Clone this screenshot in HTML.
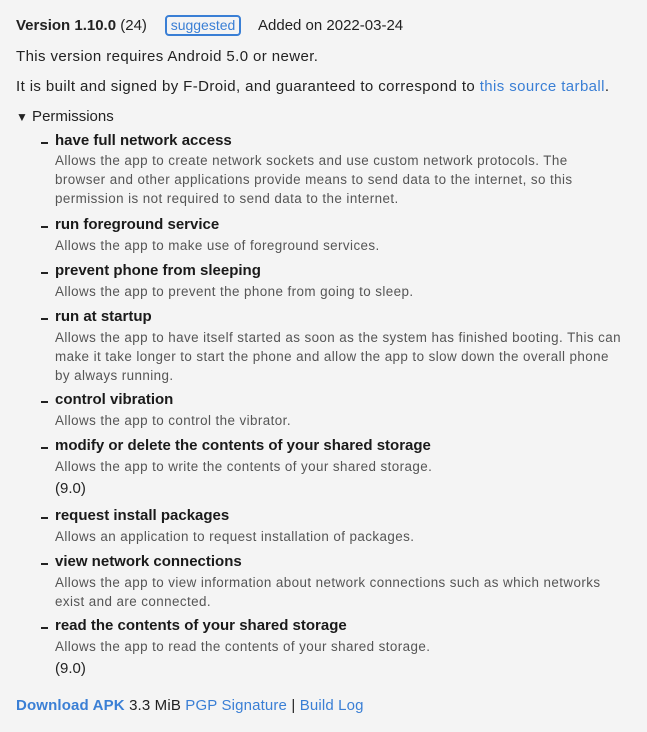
<!DOCTYPE html>
<html><head><meta charset="utf-8"><style>
html,body{margin:0;padding:0;}
body{width:647px;height:732px;background:#f4f4f4;font-family:"Liberation Sans",sans-serif;color:#222;position:relative;overflow:hidden}
.a{position:absolute;white-space:nowrap;}
.m{font-size:15px;line-height:18px;}
.ls{letter-spacing:0.4px}
.t{font-size:15px;line-height:18px;font-weight:bold;left:55px;color:#1a1a1a}
.d{font-size:13.4px;line-height:19px;left:55px;color:#555;letter-spacing:0.42px}
.dash{position:absolute;left:41px;width:7px;height:2px;background:#222}
a{color:#3a7fd5;text-decoration:none}
.b{font-weight:bold}
</style></head><body>
<div class="a m" style="left:16px;top:17px"><span class="b">Version 1.10.0</span> (24)</div>
<div class="a" style="left:165px;top:15px;width:76px;height:21px;border:2px solid #3a7fd5;border-radius:4px;box-sizing:border-box;color:#3a7fd5;font-size:14px;line-height:17px;text-align:center">suggested</div>
<div class="a m" style="left:258px;top:17px">Added on 2022-03-24</div>
<div class="a m ls" style="left:16px;top:48px">This version requires Android 5.0 or newer.</div>
<div class="a m ls" style="left:16px;top:78px">It is built and signed by F-Droid, and guaranteed to correspond to <a>this source tarball</a>.</div>
<div class="a m" style="left:16px;top:108px"><span style="font-size:12px">▼</span> Permissions</div>

<div class="dash" style="top:142px"></div><div class="a t" style="top:132px">have full network access</div>
<div class="a d" style="top:151px">Allows the app to create network sockets and use custom network protocols. The<br>browser and other applications provide means to send data to the internet, so this<br>permission is not required to send data to the internet.</div>

<div class="dash" style="top:226px"></div><div class="a t" style="top:216px">run foreground service</div>
<div class="a d" style="top:236px">Allows the app to make use of foreground services.</div>

<div class="dash" style="top:272px"></div><div class="a t" style="top:262px">prevent phone from sleeping</div>
<div class="a d" style="top:282px">Allows the app to prevent the phone from going to sleep.</div>

<div class="dash" style="top:318px"></div><div class="a t" style="top:308px">run at startup</div>
<div class="a d" style="top:328px">Allows the app to have itself started as soon as the system has finished booting. This can<br>make it take longer to start the phone and allow the app to slow down the overall phone<br>by always running.</div>

<div class="dash" style="top:401px"></div><div class="a t" style="top:391px">control vibration</div>
<div class="a d" style="top:411px">Allows the app to control the vibrator.</div>

<div class="dash" style="top:447px"></div><div class="a t" style="top:437px">modify or delete the contents of your shared storage</div>
<div class="a d" style="top:457px">Allows the app to write the contents of your shared storage.</div>
<div class="a m" style="left:55px;top:480px">(9.0)</div>

<div class="dash" style="top:517px"></div><div class="a t" style="top:507px">request install packages</div>
<div class="a d" style="top:527px">Allows an application to request installation of packages.</div>

<div class="dash" style="top:563px"></div><div class="a t" style="top:553px">view network connections</div>
<div class="a d" style="top:573px">Allows the app to view information about network connections such as which networks<br>exist and are connected.</div>

<div class="dash" style="top:627px"></div><div class="a t" style="top:617px">read the contents of your shared storage</div>
<div class="a d" style="top:637px">Allows the app to read the contents of your shared storage.</div>
<div class="a m" style="left:55px;top:660px">(9.0)</div>

<div class="a m" style="left:16px;top:697px;letter-spacing:0.15px"><a class="b">Download APK</a> 3.3 MiB <a>PGP Signature</a> | <a>Build Log</a></div>
</body></html>
